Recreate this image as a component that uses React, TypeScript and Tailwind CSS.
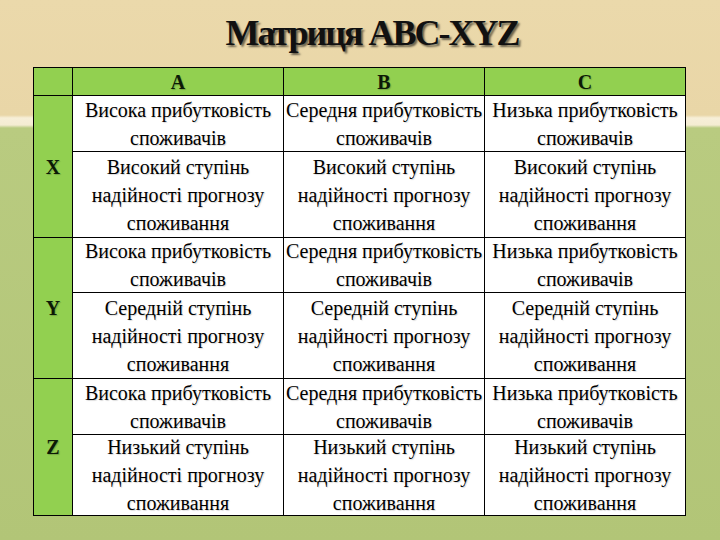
import React from 'react';

const profit = ['Висока прибутковість', 'Середня прибутковість', 'Низька прибутковість'];
const levels: Record<string, string> = { X: 'Високий', Y: 'Середній', Z: 'Низький' };

function Cell({ lines }: { lines: string[] }) {
  return (
    <div className="bg-white flex flex-col items-center justify-center">
      {lines.map((l, i) => (
        <span
          key={i}
          className="font-['Liberation_Serif',serif] text-[20px] leading-[28px] text-black whitespace-nowrap [text-shadow:1px_1px_1px_rgba(0,0,0,0.15)]"
        >
          {l}
        </span>
      ))}
    </div>
  );
}

function Head({ children, className = '' }: { children: React.ReactNode; className?: string }) {
  return (
    <div className={'bg-[#92d050] flex items-center justify-center ' + className}>
      <span className="font-['Liberation_Serif',serif] text-[20px] leading-[24px] font-bold text-[#0c1a06] [text-shadow:1px_1px_1px_rgba(0,0,0,0.2)]">
        {children}
      </span>
    </div>
  );
}

export default function App() {
  const rows = ['X', 'Y', 'Z'];
  return (
    <div className="w-[720px] h-[540px] overflow-hidden bg-[linear-gradient(to_bottom,#ebd9ab_0px,#e9d6a7_115px,#f7efd8_118px,#f4ecd2_125px,#b9cb80_128px,#b2c577_540px)]">
      <div className="h-[67px] pt-[15px] pl-[24px] text-center">
        <h1 className="font-['Liberation_Serif',serif] text-[36px] leading-[36px] font-bold tracking-[-2px] text-[#111] [text-shadow:2px_2px_2px_rgba(0,0,0,0.55)]">
          Матриця ABC-XYZ
        </h1>
      </div>
      <div className="ml-[33px] w-[653px] grid grid-cols-[38px_210px_200px_200px] grid-rows-[27px_55px_85px_54px_85px_55px_80px] gap-px p-px bg-black">
        <div className="bg-[#92d050]" />
        {['A', 'B', 'C'].map((h) => (
          <Head key={h}>{h}</Head>
        ))}
        {rows.map((r, ri) => (
          <React.Fragment key={r}>
            <Head className={'row-span-2 ' + (ri === 0 ? 'row-start-2' : ri === 1 ? 'row-start-4' : 'row-start-6')}>
              {r}
            </Head>
            {profit.map((p) => (
              <Cell key={p} lines={[p, 'споживачів']} />
            ))}
            {profit.map((p) => (
              <Cell key={p + 'l'} lines={[levels[r] + ' ступінь', 'надійності прогнозу', 'споживання']} />
            ))}
          </React.Fragment>
        ))}
      </div>
    </div>
  );
}
